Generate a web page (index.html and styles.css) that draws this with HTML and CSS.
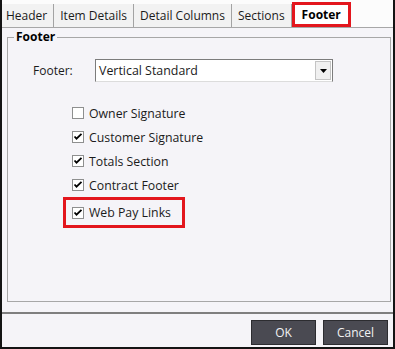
FILE: index.html
```html
<!DOCTYPE html>
<html lang="en">
<head>
    <meta charset="UTF-8">
    <title>Print Layout - Footer</title>
    <link rel="stylesheet" href="styles.css">
</head>
<body>
    <div class="dialog">
        <div class="tabs">
            <div class="tab">Header</div>
            <div class="tab">Item Details</div>
            <div class="tab">Detail Columns</div>
            <div class="tab">Sections</div>
            <div class="tab tab-active">Footer</div>
        </div>

        <div class="panel">
            <fieldset class="group">
                <legend>Footer</legend>

                <div class="field-row">
                    <label class="field-label">Footer:</label>
                    <div class="select">
                        <span class="select-value">Vertical Standard</span>
                        <span class="select-btn">
                            <svg width="7" height="4" viewBox="0 0 7 4"><path d="M0 0h7L3.5 4z" fill="#000"/></svg>
                        </span>
                    </div>
                </div>

                <div class="checks">
                    <div class="check"><span class="box"></span>Owner Signature</div>
                    <div class="check"><span class="box checked"></span>Customer Signature</div>
                    <div class="check"><span class="box checked"></span>Totals Section</div>
                    <div class="check"><span class="box checked"></span>Contract Footer</div>
                    <div class="check check-marked"><span class="box checked"></span>Web Pay Links</div>
                </div>
            </fieldset>
        </div>

        <div class="actions">
            <button class="btn">OK</button>
            <button class="btn">Cancel</button>
        </div>
    </div>
</body>
</html>
```

FILE: styles.css
```css
:root {
    --panel-bg: #f5f4f8;
    --line: #a7a7a7;
    --text: #1b1b1b;
    --mark: #e3161d;
    --button-bg: #4a4a52;
}

body {
    margin: 0;
    background: #ffffff;
    font-family: 'Open Sans', 'Liberation Sans', sans-serif;
    font-size: 12px;
    color: var(--text);
}

.dialog {
    width: 395px;
    height: 349px;
    box-sizing: border-box;
    border: 2px solid #141414;
    border-top: 0;
    display: flex;
    flex-direction: column;
    background: var(--panel-bg);
}

/* tab strip */
.tabs {
    height: 28px;
    box-sizing: border-box;
    padding-top: 4px;
    display: flex;
    background: #fcfcfc;
    border-bottom: 1px solid var(--line);
}

.tab {
    display: flex;
    align-items: center;
    padding: 0 6px;
    border-right: 1px solid #a3a3a3;
    background: #f2f2f2;
    white-space: nowrap;
}

.tab:first-child {
    padding-left: 4px;
}

.tab-active {
    margin-top: -2px;
    border: 3px solid var(--mark);
    padding: 0 7px;
    background: #ffffff;
    font-weight: 700;
    color: #000;
}

/* group box */
.panel {
    flex: 1;
    display: flex;
    padding: 1px 2px 10px 5px;
}

.group {
    flex: 1;
    margin: 0;
    padding: 0;
    border: 1px solid var(--line);
}

.group legend {
    margin-left: 6px;
    padding: 0 2px;
    font-weight: 700;
    line-height: 16px;
    color: #000;
}

.field-row {
    display: flex;
    align-items: center;
    margin-top: 14px;
    padding-left: 25px;
}

.field-label {
    width: 62px;
}

.select {
    width: 238px;
    height: 23px;
    box-sizing: border-box;
    display: flex;
    align-items: center;
    justify-content: space-between;
    background: #ffffff;
    border: 1px solid #7c7c7c;
    border-bottom-color: #dcdcdc;
    padding: 0 1px 0 3px;
    font-size: 12.4px;
}

.select-btn {
    width: 16px;
    height: 19px;
    box-sizing: border-box;
    display: flex;
    align-items: center;
    justify-content: center;
    background: #f0f0f0;
    border: 1px solid #c4c4c4;
}

/* checkbox list */
.checks {
    display: flex;
    flex-direction: column;
    align-items: flex-start;
    margin-top: 19px;
    padding-left: 64px;
}

.check {
    display: flex;
    align-items: center;
    height: 24px;
    font-size: 12.3px;
}

.box {
    width: 12px;
    height: 12px;
    box-sizing: border-box;
    margin-right: 5px;
    background: #ffffff;
    border: 1px solid #8e8f8f;
}

.box.checked {
    background: #fff url("data:image/svg+xml,%3Csvg xmlns='http://www.w3.org/2000/svg' width='10' height='10' viewBox='0 0 10 10'%3E%3Cpath d='M1.5 4.5l2 2.2L8.5 1.8' fill='none' stroke='%23000' stroke-width='1.8'/%3E%3C/svg%3E") center / 10px 10px no-repeat;
}

.check-marked {
    height: 31px;
    box-sizing: border-box;
    margin-left: -9px;
    padding: 0 11px 0 6px;
    border: 3px solid var(--mark);
}

/* bottom buttons */
.actions {
    height: 35px;
    box-sizing: border-box;
    display: flex;
    justify-content: flex-end;
    align-items: flex-start;
    gap: 7px;
    padding: 6px 5px 0 0;
    border-top: 2px solid #7f7f7f;
}

.btn {
    width: 65px;
    height: 25px;
    background: var(--button-bg);
    border: 1px solid #2c2c30;
    color: #f2f2f2;
    font-family: 'Open Sans', 'Liberation Sans', sans-serif;
    font-size: 12px;
    padding: 0;
}
```
